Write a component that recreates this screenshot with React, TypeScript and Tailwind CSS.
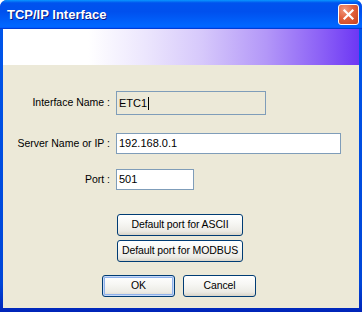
import React from "react";

const font = { fontFamily: '"Liberation Sans", Arial, sans-serif' };

function XPButton({ children, w, def }: { children: React.ReactNode; w: string; def?: boolean }) {
  return (
    <div
      className={`${w} h-[22px] flex items-center justify-center whitespace-nowrap rounded-[3px] border border-[#003c74] text-[10.5px] tracking-[-0.1px] text-black bg-[linear-gradient(to_bottom,#ffffff_0%,#f7f7f4_40%,#ecebe5_80%,#d8d4c8_100%)] ${
        def ? "shadow-[inset_0_0_0_1px_#c6d9f7,inset_0_0_0_2px_#8fb1ea]" : ""
      }`}
    >
      {children}
    </div>
  );
}

export default function App() {
  return (
    <div className="w-[362px] h-[312px] flex flex-col bg-[#0838d6] rounded-t-[7px] overflow-hidden" style={font}>
      {/* Title bar */}
      <div className="h-[29px] shrink-0 flex items-center justify-between pl-[7px] pr-[3px] bg-[linear-gradient(to_bottom,#0997ff_0%,#0053ee_10%,#0050ee_40%,#0066ff_88%,#0066ff_93%,#005bff_95%,#003dd7_96%,#003dd7_100%)]">
        <span className="text-white font-bold text-[13px] [text-shadow:1px_1px_#0a1883] mt-[1px]">
          TCP/IP Interface
        </span>
        <div className="w-[21px] h-[21px] rounded-[3px] border border-white flex items-center justify-center bg-[radial-gradient(circle_at_30%_25%,#f19a7e_0%,#e2603b_45%,#c4411f_100%)]">
          <svg width="13" height="13" viewBox="0 0 13 13">
            <path d="M2.5 2.5 L10.5 10.5 M10.5 2.5 L2.5 10.5" stroke="#fff" strokeWidth="2.2" strokeLinecap="square" />
          </svg>
        </div>
      </div>
      {/* Body with frame borders */}
      <div className="flex-1 flex flex-col px-[3px] pb-[4px] bg-[linear-gradient(to_bottom,#0055ea,#0046d8_90%,#0024b8)]">
        <div className="h-[36px] shrink-0 bg-[linear-gradient(to_right,#ffffff_0%,#ffffff_24%,#ece6fd_40%,#d6c8fb_56%,#b397f8_74%,#8a5ef6_90%,#6d37f4_100%)]" />
        <div className="flex-1 bg-[#ece9d8] pt-[26px] text-[11px] text-black">
          <div className="grid grid-cols-[107px_auto] gap-x-[6px] items-center">
            <div className="text-right text-[10.5px]">Interface Name :</div>
            <div className="w-[150px] h-[24px] border border-[#7f9db9] bg-[#ece9d8] flex items-center pl-[2px]">
              <span>ETC1</span>
              <span className="inline-block w-[1px] h-[13px] bg-black ml-[1px]" />
            </div>

            <div className="text-right text-[10.5px] mt-[18px]">Server Name or IP :</div>
            <div className="w-[225px] h-[21px] border border-[#7f9db9] bg-white flex items-center pl-[2px] mt-[18px]">
              192.168.0.1
            </div>

            <div className="text-right text-[10.5px] mt-[15px]">Port :</div>
            <div className="w-[78px] h-[21px] border border-[#7f9db9] bg-white flex items-center pl-[2px] mt-[15px]">
              501
            </div>

            <div />
            <div className="flex flex-col gap-[4px] mt-[24px] ml-[1px]">
              <XPButton w="w-[126px]">Default port for ASCII</XPButton>
              <XPButton w="w-[126px]">Default port for MODBUS</XPButton>
            </div>
          </div>
          <div className="flex gap-[8px] pl-[99px] mt-[13px]">
            <XPButton w="w-[73px]" def>
              OK
            </XPButton>
            <XPButton w="w-[73px]">Cancel</XPButton>
          </div>
        </div>
      </div>
    </div>
  );
}
